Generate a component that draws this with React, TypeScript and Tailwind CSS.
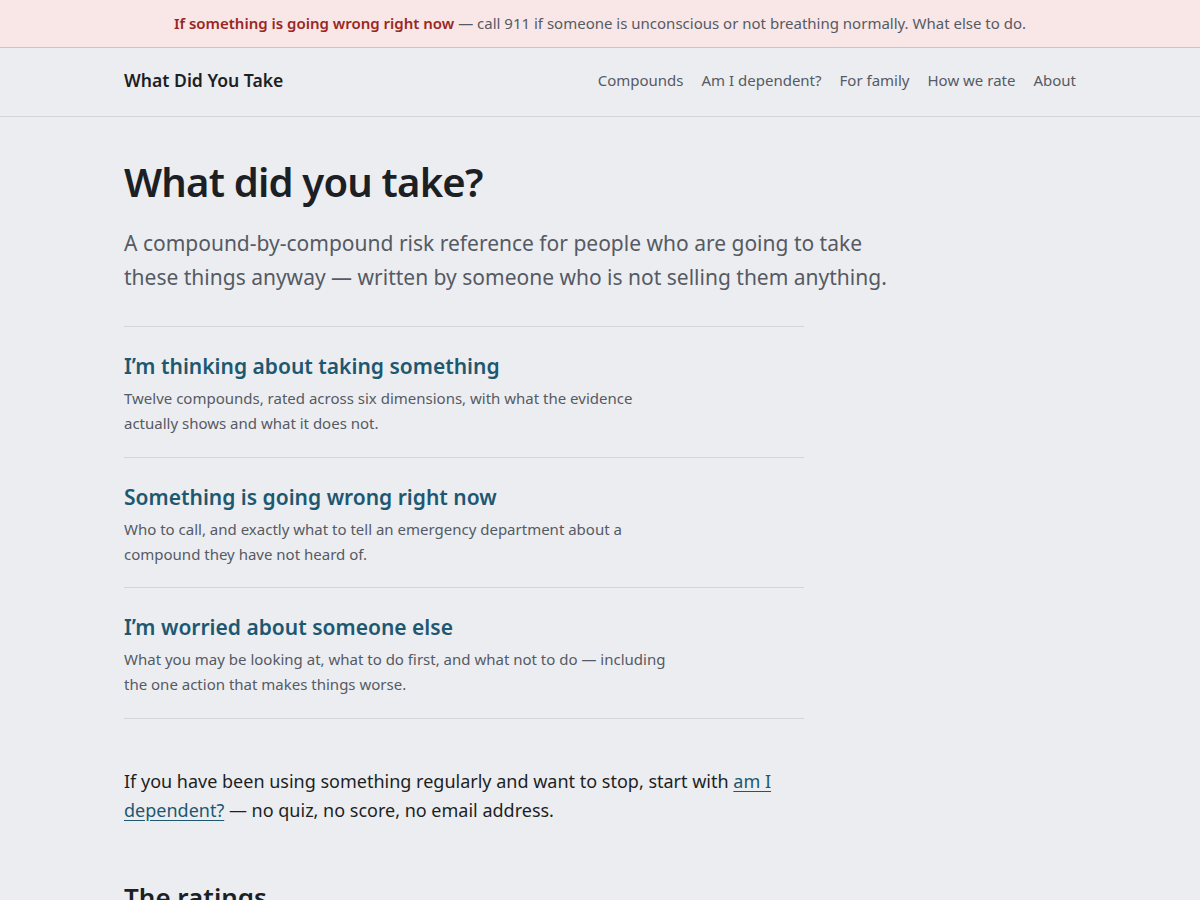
const paths = [
  {
    title: "I’m thinking about taking something",
    text: "Twelve compounds, rated across six dimensions, with what the evidence actually shows and what it does not.",
  },
  {
    title: "Something is going wrong right now",
    text: "Who to call, and exactly what to tell an emergency department about a compound they have not heard of.",
  },
  {
    title: "I’m worried about someone else",
    text: "What you may be looking at, what to do first, and what not to do — including the one action that makes things worse.",
  },
]

const nav = ["Compounds", "Am I dependent?", "For family", "How we rate", "About"]

export default function App() {
  return (
    <div className="min-h-screen bg-[#ecedf1] text-[#1c1f24] font-['Noto_Sans',sans-serif]">
      {/* Emergency banner */}
      <div className="bg-[#f8e7e6] border-b border-[#dcbcbc] h-[48px] flex items-center justify-center text-[15px] text-[#555a63]">
        <p>
          <a href="#" className="font-semibold text-[#9a2623]">
            If something is going wrong right now
          </a>{" "}
          — call 911 if someone is unconscious or not breathing normally. What else to do.
        </p>
      </div>

      {/* Header */}
      <header className="border-b border-[#d3d5da] pb-1">
        <div className="max-w-[1000px] mx-auto px-6 h-[64px] flex items-center justify-between">
          <a href="#" className="text-[17.6px] font-semibold text-[#1c1f24]">
            What Did You Take
          </a>
          <nav className="flex items-center gap-[18px] text-[15px] text-[#555a63]">
            {nav.map((n) => (
              <a key={n} href="#">
                {n}
              </a>
            ))}
          </nav>
        </div>
      </header>

      <main className="max-w-[1000px] mx-auto px-6 pt-[40px] pb-16">
        <h1 className="text-[40px] leading-[1.25] font-semibold tracking-[-0.02em] text-[#1c1f24]">
          What did you take?
        </h1>
        <p className="mt-[19px] max-w-[780px] text-[21px] leading-[34px] text-[#555a63]">
          A compound-by-compound risk reference for people who are going to take these things anyway — written by
          someone who is not selling them anything.
        </p>

        {/* Paths */}
        <div className="mt-[32px] max-w-[680px] border-t border-[#d3d5da]">
          {paths.map((p) => (
            <a key={p.title} href="#" className="block border-b border-[#d3d5da] pt-[26px] pb-[20.5px]">
              <h2 className="text-[21px] leading-[27px] font-semibold text-[#1d5870]">{p.title}</h2>
              <p className="mt-[6px] max-w-[550px] text-[15px] leading-[25px] text-[#555a63]">{p.text}</p>
            </a>
          ))}
        </div>

        <p className="mt-[48px] max-w-[680px] text-[18px] leading-[29px] text-[#1c1f24]">
          If you have been using something regularly and want to stop, start with{" "}
          <a href="#" className="text-[#1d5870] underline underline-offset-[3px]">
            am I dependent?
          </a>{" "}
          — no quiz, no score, no email address.
        </p>

        <h2 className="mt-[56px] text-[26px] leading-[1.3] font-semibold text-[#1c1f24]">The ratings</h2>
      </main>
    </div>
  )
}
